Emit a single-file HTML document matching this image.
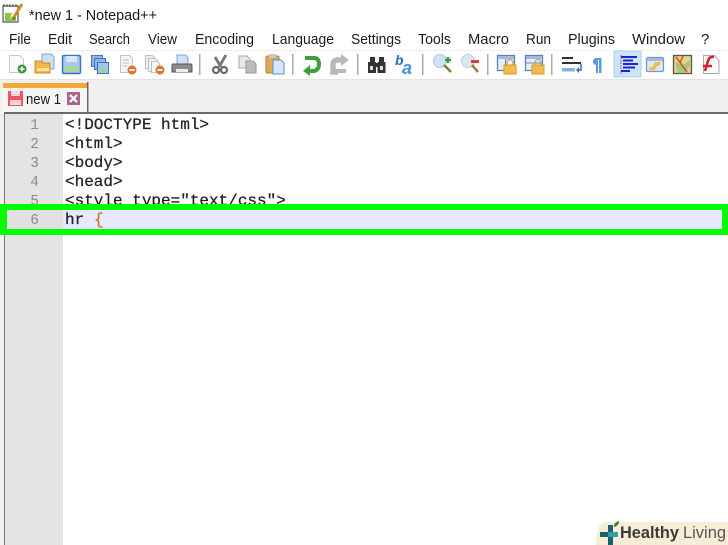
<!DOCTYPE html>
<html><head><meta charset="utf-8"><title>new 1 - Notepad++</title>
<style>
html,body{margin:0;padding:0;background:#fff;width:728px;height:545px;overflow:hidden}
svg{display:block;filter:blur(.35px)}
.s{font-family:"Liberation Sans",sans-serif;fill:#1a1a1a}
.m{font-size:15px}
.c{font-family:"Liberation Mono",monospace;font-size:16px;fill:#222;stroke:#222;stroke-width:.25}
.n{font-family:"Liberation Mono",monospace;font-size:14.500px;fill:#8a8a8a}
</style></head><body>
<svg width="728" height="545" viewBox="0 0 728 545" xmlns="http://www.w3.org/2000/svg">
<rect width="728" height="545" fill="#fff"/>
<!-- app icon -->
<path d="M3 6h15v16H3z" fill="#fff" stroke="#555" stroke-width="1.200"/>
<path d="M5 13l7 0-2 6 6-7v9H5z" fill="#8cc24a"/>
<path d="M4 4v3M7 4v3M10 4v3M13 4v3M16 4v3" stroke="#555" stroke-width="1"/>
<path d="M22 4L14 17" stroke="#d9891e" stroke-width="2.800"/>
<path d="M14 17l-1.500 3 2.800-1.800z" fill="#333"/>
<text class="s" x="29" y="20" font-size="15" textLength="128" lengthAdjust="spacingAndGlyphs">*new 1 - Notepad++</text>
<!-- menu -->
<g class="s m">
<text x="9" y="44" textLength="22" lengthAdjust="spacingAndGlyphs">File</text>
<text x="48" y="44" textLength="24" lengthAdjust="spacingAndGlyphs">Edit</text>
<text x="89" y="44" textLength="41" lengthAdjust="spacingAndGlyphs">Search</text>
<text x="148" y="44" textLength="29" lengthAdjust="spacingAndGlyphs">View</text>
<text x="195" y="44" textLength="59" lengthAdjust="spacingAndGlyphs">Encoding</text>
<text x="272" y="44" textLength="62" lengthAdjust="spacingAndGlyphs">Language</text>
<text x="351" y="44" textLength="50" lengthAdjust="spacingAndGlyphs">Settings</text>
<text x="418" y="44" textLength="33" lengthAdjust="spacingAndGlyphs">Tools</text>
<text x="468" y="44" textLength="41" lengthAdjust="spacingAndGlyphs">Macro</text>
<text x="526" y="44" textLength="25" lengthAdjust="spacingAndGlyphs">Run</text>
<text x="568" y="44" textLength="47" lengthAdjust="spacingAndGlyphs">Plugins</text>
<text x="632" y="44" textLength="53" lengthAdjust="spacingAndGlyphs">Window</text>
<text x="701" y="44">?</text>
</g>
<!-- toolbar borders -->
<rect x="0" y="50" width="728" height="1" fill="#efefef"/>
<rect x="0" y="80" width="728" height="32" fill="#f0f0f0"/>
<rect x="0" y="79" width="728" height="1" fill="#e3e3e3"/>
<!-- separators -->
<g fill="#a8a8a8">
<rect x="199" y="54" width="1.500" height="21"/><rect x="292" y="54" width="1.500" height="21"/>
<rect x="357" y="54" width="1.500" height="21"/><rect x="422" y="54" width="1.500" height="21"/>
<rect x="487" y="54" width="1.500" height="21"/><rect x="551" y="54" width="1.500" height="21"/>
</g>
<!-- new -->
<path d="M9.500 55.500h10l4 4v13h-14z" fill="#fbfbfb" stroke="#c8c8c8"/>
<circle cx="22" cy="69" r="4.500" fill="#3f8f3a"/><path d="M19.500 69h5M22 66.500v5" stroke="#fff" stroke-width="1.500"/>
<!-- open -->
<path d="M42 54h9l3 3v12H42z" fill="#cfe0f5" stroke="#7fa3cf"/>
<path d="M35 61h6l2 2h7v10H35z" fill="#f3b64a" stroke="#c98a25"/><rect x="37" y="68" width="12" height="3" fill="#ffe39a"/>
<!-- save -->
<rect x="62.500" y="55.500" width="18" height="18" rx="1.500" fill="#a9c8ee" stroke="#3f74bd" stroke-width="1.500"/>
<rect x="66" y="56" width="11" height="6" fill="#dbe7f7"/><rect x="65" y="66" width="13" height="6" fill="#a9d698"/>
<!-- save all -->
<rect x="91.500" y="55.500" width="11" height="11" fill="#8fb5e6" stroke="#3f74bd"/>
<rect x="94.500" y="58.500" width="11" height="11" fill="#8fb5e6" stroke="#3f74bd"/>
<rect x="97.500" y="62.500" width="11" height="11" fill="#a3c4ec" stroke="#3f74bd"/>
<rect x="100" y="68" width="6" height="4" fill="#9fd08c"/>
<!-- close -->
<path d="M120.500 55.500h9l3 3v14h-12z" fill="#f5f5f5" stroke="#c4c4c4"/>
<path d="M123 60h6M123 63h6M123 66h4" stroke="#bbb"/>
<circle cx="132" cy="70" r="4.500" fill="#e4702a"/><rect x="129.500" y="69" width="5" height="2" fill="#fff"/>
<!-- close all -->
<path d="M145.500 55.500h7l2 2v11h-9z" fill="#eee" stroke="#c0c0c0"/>
<path d="M148.500 58.500h7l2 2v11h-9z" fill="#f2f2f2" stroke="#c0c0c0"/>
<path d="M151.500 61.500h6l2 2v9h-8z" fill="#f8f8f8" stroke="#c0c0c0"/>
<circle cx="160" cy="70" r="4.500" fill="#e4702a"/><rect x="157.500" y="69" width="5" height="2" fill="#fff"/>
<!-- print -->
<path d="M177 55h9l2 3v7h-11z" fill="#cfe0f5" stroke="#7fa3cf"/>
<path d="M173 64h18q1 0 1 2v6h-20v-6q0-2 1-2z" fill="#8c8c8c" stroke="#555"/>
<rect x="176" y="69" width="12" height="3" fill="#eee"/>
<!-- cut -->
<path d="M226 55l-7 12M215 57l6 10" stroke="#777" stroke-width="2.800" fill="none"/>
<circle cx="216" cy="70" r="3" fill="none" stroke="#666" stroke-width="2.200"/><circle cx="224" cy="70" r="3" fill="none" stroke="#666" stroke-width="2.200"/>
<!-- copy -->
<path d="M239 56h8l3 3v9h-11z" fill="#e8e8e8" stroke="#aaa"/>
<path d="M246 61h7l3 3v9h-10z" fill="#bcbcbc" stroke="#999"/>
<!-- paste -->
<rect x="266" y="56" width="13" height="17" rx="1.500" fill="#e0a558" stroke="#b87d30"/>
<rect x="269" y="54" width="7" height="4" fill="#c9c9c9"/>
<path d="M273 60h8l3 3v11h-11z" fill="#d8e8fa" stroke="#5c8fd0"/>
<!-- undo -->
<path d="M305 58h9q5 0 5 6t-5 7h-7" fill="none" stroke="#3ea03a" stroke-width="4"/>
<path d="M310 65l-7 6 7 5z" fill="#3ea03a"/>
<!-- redo -->
<path d="M344 60h-6q-5 0-5 5v7h5" fill="none" stroke="#b8b8b8" stroke-width="5.500"/>
<path d="M341 54l8 6-8 6z" fill="#b8b8b8"/>
<rect x="332" y="69" width="14" height="4" fill="#b8b8b8"/>
<!-- find -->
<g fill="#333"><rect x="368" y="62" width="8" height="11"/><rect x="377.500" y="62" width="8" height="11"/><rect x="370" y="57" width="5" height="6"/><rect x="379" y="57" width="5" height="6"/><rect x="375" y="63" width="3" height="4"/></g>
<g fill="#ddd"><rect x="370" y="66" width="3" height="4"/><rect x="380" y="66" width="3" height="4"/></g>
<!-- replace -->
<text x="395" y="65" font-family="Liberation Sans,sans-serif" font-size="14" font-weight="bold" font-style="italic" fill="#2e6fc8">b</text>
<text x="402" y="74" font-family="Liberation Sans,sans-serif" font-size="18" font-weight="bold" font-style="italic" fill="#4d8fdc">a</text>
<!-- zoom in -->
<circle cx="440" cy="61" r="6.500" fill="#cfe3f4" stroke="#a9c8e0"/>
<path d="M444 65l7 7" stroke="#8c7a30" stroke-width="2.500"/>
<path d="M445 60h6M448 57v6" stroke="#3f9a3a" stroke-width="2.500"/>
<!-- zoom out -->
<circle cx="468" cy="61" r="6.500" fill="#dde7f2" stroke="#bcd0e2"/>
<path d="M472 65l6 7" stroke="#a8793a" stroke-width="2.500"/>
<rect x="471" y="60" width="8" height="3" fill="#e03a3a"/>
<!-- sync v -->
<rect x="497.500" y="55.500" width="17" height="15" fill="#e7eef7" stroke="#5b85b8" stroke-width="1.300"/>
<rect x="498" y="56" width="16" height="3" fill="#9dbbe0"/><path d="M505.500 59v11" stroke="#5b85b8"/>
<rect x="504" y="65" width="12" height="9" fill="#f0bd4e" stroke="#d49a2a"/>
<path d="M507 65v-2.500a3 3 0 0 1 6 0v2.500" fill="none" stroke="#c9a35a" stroke-width="1.300"/>
<!-- sync h -->
<rect x="525.500" y="55.500" width="17" height="15" fill="#e7eef7" stroke="#5b85b8" stroke-width="1.300"/>
<rect x="526" y="56" width="16" height="3" fill="#9dbbe0"/><path d="M526 63h16" stroke="#5b85b8"/>
<rect x="532" y="65" width="12" height="9" fill="#f0bd4e" stroke="#d49a2a"/>
<path d="M535 65v-2.500a3 3 0 0 1 6 0v2.500" fill="none" stroke="#c9a35a" stroke-width="1.300"/>
<!-- wrap -->
<rect x="562" y="57" width="11" height="2" fill="#333"/><rect x="562" y="62" width="19" height="2" fill="#333"/>
<rect x="562" y="68" width="13" height="3.500" fill="#7fb3e6"/>
<path d="M581 64v6h-3" fill="none" stroke="#2d6fc0" stroke-width="1.500"/><path d="M579 67l-3 3 3 3z" fill="#2d6fc0"/>
<!-- pilcrow -->
<path d="M596 58h5.500v15h-2.500V60h-1v13h-2v-8q-3-.5-3-3.500t3-3.500z" fill="#5b9bd8"/>
<!-- indent guide active -->
<rect x="614" y="51" width="27" height="26" fill="#cde4f8" stroke="#a8d0f0"/>
<path d="M621 55v20" stroke="#b04060" stroke-width="1" stroke-dasharray="1.500 1"/>
<g fill="#1e22c8"><rect x="621" y="56" width="16" height="2"/><rect x="623" y="59.500" width="10" height="2"/><rect x="623" y="63" width="15" height="2"/><rect x="623" y="66.500" width="12" height="2"/><rect x="621" y="70" width="9" height="2"/></g>
<!-- doc map -->
<rect x="646.500" y="57.500" width="17" height="14" rx="1.500" fill="#dbe9f8" stroke="#7099c8" stroke-width="1.300"/>
<rect x="647" y="58" width="16" height="3" fill="#9dbbe0"/>
<path d="M648 69l5-3 2-4h6l-2 4h-2l-3 5z" fill="#f0bd4e"/>
<!-- function map -->
<rect x="673.500" y="55.500" width="18" height="18" fill="#e6d48a" stroke="#555" stroke-width="1.300"/>
<path d="M675 62l8 3 7-5v6l-6 7h-6z" fill="#a5c77a"/>
<path d="M676 57l11 15M683 56l-3 7" stroke="#c8542a" stroke-width="1.500" fill="none"/>
<!-- monitoring -->
<path d="M703.500 55.500h11l4.500 5v13h-15.500z" fill="#fafafa" stroke="#aaa"/>
<path d="M714 57q-5-1-6 4l-3 10M703 66h9" stroke="#d8232a" stroke-width="2.500" fill="none"/>
<!-- tab -->
<rect x="3" y="83" width="85" height="29" fill="#f5f5f5"/>
<rect x="3" y="83" width="84" height="5" fill="#f5a733"/>
<rect x="87" y="82" width="1.500" height="30" fill="#6a6a6a"/>
<rect x="8" y="91" width="15" height="15" fill="#ee5560"/>
<rect x="11" y="91" width="9" height="5" fill="#fbd4d6"/><rect x="10" y="100" width="11" height="5" fill="#fbd4d6"/>
<text class="s" x="26" y="104" font-size="14.500" textLength="35" lengthAdjust="spacingAndGlyphs" fill="#222">new 1</text>
<rect x="67" y="92" width="13" height="13" fill="#a7688c"/>
<path d="M70 95l7 7M77 95l-7 7" stroke="#fff" stroke-width="2.200"/>
<!-- editor -->
<rect x="0" y="113" width="4" height="432" fill="#f0f0f0"/>
<rect x="4" y="112" width="724" height="2" fill="#6a6a6a"/>
<rect x="4" y="114" width="724" height="431" fill="#fff"/>
<rect x="4" y="113" width="1" height="432" fill="#777"/>
<rect x="5" y="114" width="58" height="431" fill="#e4e4e4"/>
<g class="n" text-anchor="end">
<text x="39" y="129">1</text><text x="39" y="148">2</text><text x="39" y="167">3</text><text x="39" y="186">4</text><text x="39" y="205">5</text>
</g>
<g class="c">
<text x="65" y="129">&lt;!DOCTYPE html&gt;</text>
<text x="65" y="148">&lt;html&gt;</text>
<text x="65" y="167">&lt;body&gt;</text>
<text x="65" y="186">&lt;head&gt;</text>
<text x="65" y="205">&lt;style type="text/css"&gt;</text>
</g>
<!-- highlighted line -->
<rect x="63" y="210" width="665" height="19" fill="#e8e8ff"/>
<rect x="5" y="210" width="58" height="19" fill="#e0e0e0"/>
<text class="n" x="39" y="224" text-anchor="end">6</text>
<text class="c" x="65" y="224">hr</text>
<text class="c" x="94" y="224" style="fill:#c8742a;stroke:#c8742a">{</text>
<rect x="0" y="204" width="728" height="6" fill="#00ff00"/>
<rect x="0" y="229" width="728" height="6" fill="#00ff00"/>
<rect x="0" y="204" width="7" height="31" fill="#00ff00"/>
<rect x="722" y="204" width="6" height="31" fill="#00ff00"/>
<!-- watermark -->
<path d="M606 522h122v23H596q0-23 10-23z" fill="#f7edd6"/>
<path d="M600 532h8v-7h5v7h5v5h-5v8h-5v-8h-8z" fill="#1f5f70"/>
<rect x="608" y="532" width="10" height="5" fill="#2f9fa8"/>
<path d="M614 527q0-5 5-6 0 5-5 6z" fill="#3f7a2e"/>
<text x="620" y="538" font-family="Liberation Sans,sans-serif" font-size="17" font-weight="bold" fill="#3a3a3a" textLength="59" lengthAdjust="spacingAndGlyphs">Healthy</text>
<text x="683" y="538" font-family="Liberation Sans,sans-serif" font-size="17" fill="#555" textLength="43" lengthAdjust="spacingAndGlyphs">Living</text>
</svg>
</body></html>
